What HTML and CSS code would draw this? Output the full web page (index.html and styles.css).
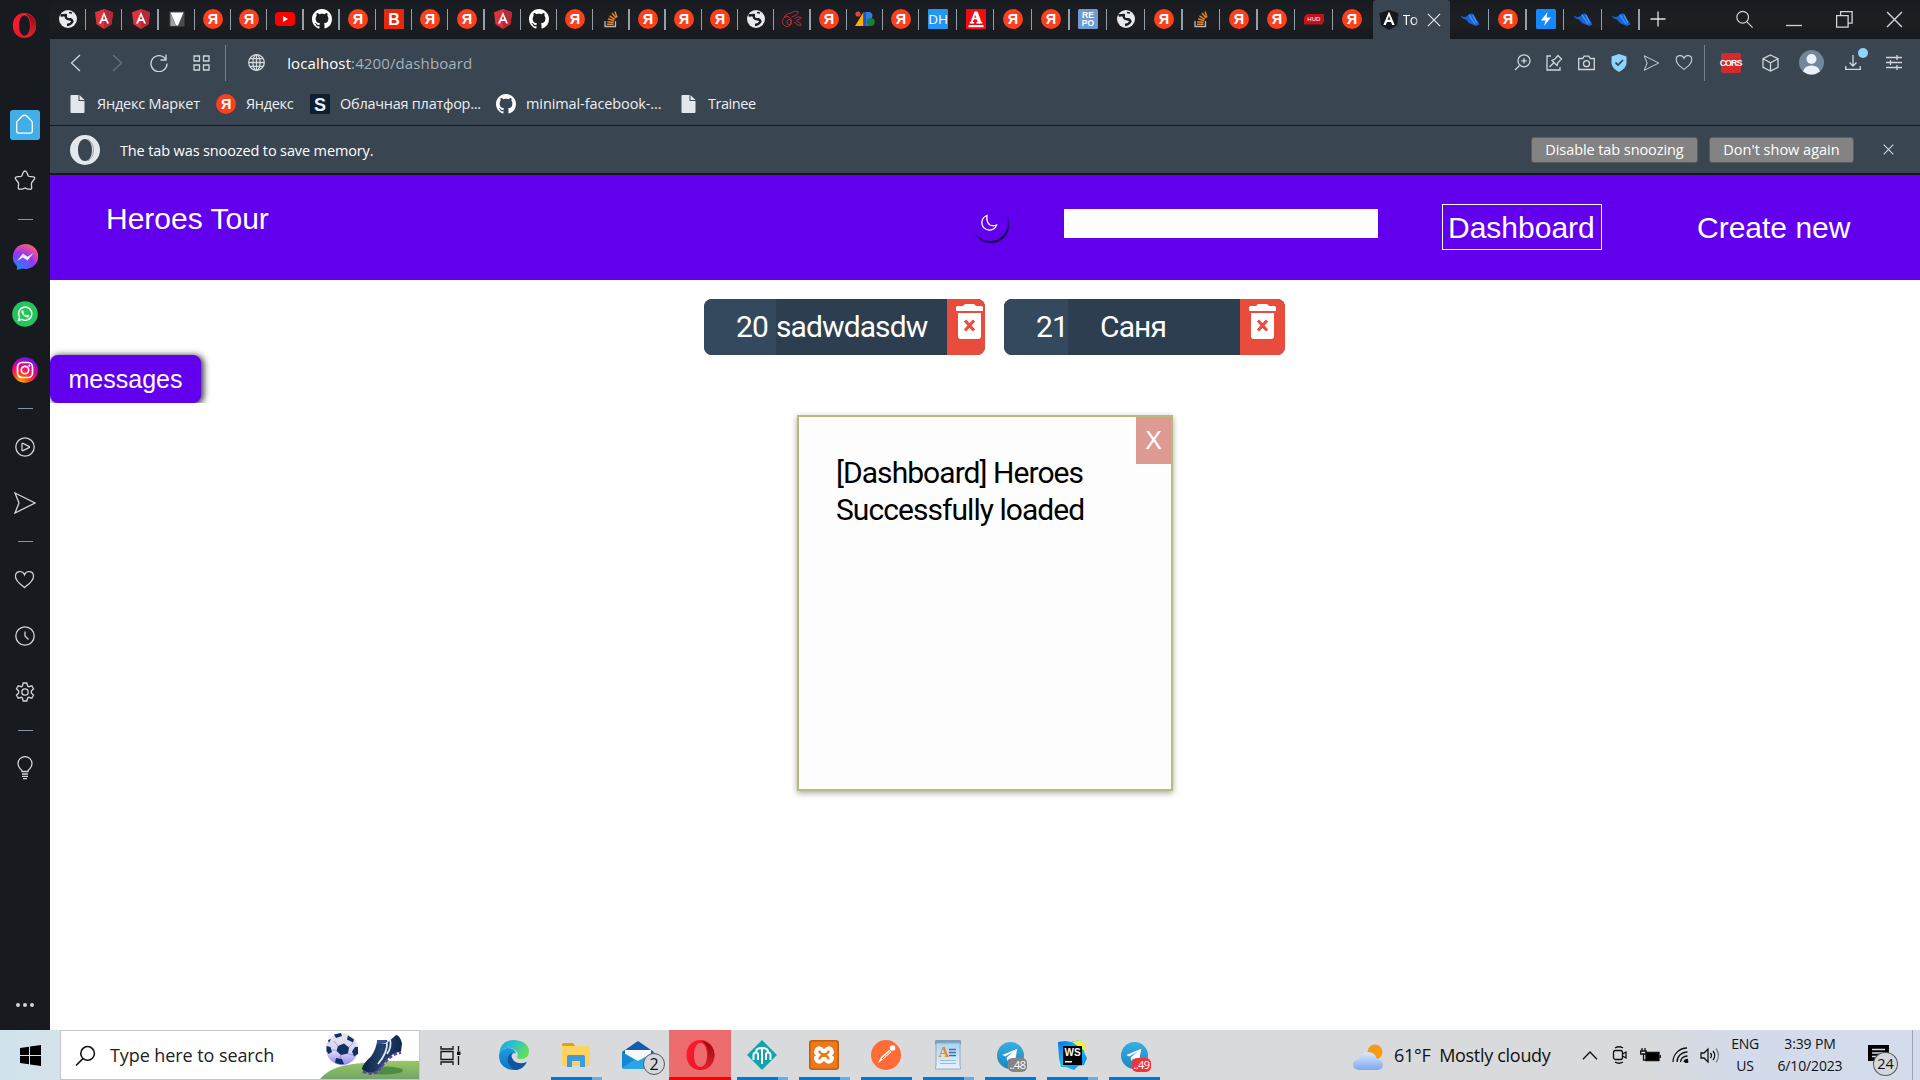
FILE: index.html
```html
<!DOCTYPE html>
<html lang="en">
<head>
<meta charset="utf-8">
<title>Tour of Heroes</title>
<link rel="stylesheet" href="styles.css">
</head>
<body>
<svg class="sprite" aria-hidden="true">
  <defs>
    <linearGradient id="gOpera" x1="0" y1="0" x2="1" y2="1"><stop offset="0" stop-color="#ff1b2d"/><stop offset="1" stop-color="#e0142a"/></linearGradient>
    <linearGradient id="gOperaIn" x1="0" y1="0" x2="0" y2="1"><stop offset="0" stop-color="#8f0b10"/><stop offset="1" stop-color="#e5222c"/></linearGradient>
    <radialGradient id="gMsg" cx=".2" cy="1" r="1.1"><stop offset="0" stop-color="#0a90ff"/><stop offset=".6" stop-color="#9a33f5"/><stop offset="1" stop-color="#ff6370"/></radialGradient>
    <radialGradient id="gIg" cx=".3" cy="1.05" r="1.05"><stop offset="0" stop-color="#ffd000"/><stop offset=".35" stop-color="#ff4a10"/><stop offset=".65" stop-color="#f0057e"/><stop offset="1" stop-color="#7a10e8"/></radialGradient>
    <linearGradient id="gEdgeA" x1="0" y1="0" x2="1" y2=".5"><stop offset="0" stop-color="#1f9de0"/><stop offset=".5" stop-color="#2fc2c8"/><stop offset="1" stop-color="#5fe05a"/></linearGradient>
    <linearGradient id="gEdgeB" x1="0" y1="0" x2="0" y2="1"><stop offset="0" stop-color="#1b9de2"/><stop offset="1" stop-color="#1173c4"/></linearGradient>
    <linearGradient id="gTg" x1="0" y1="0" x2="0" y2="1"><stop offset="0" stop-color="#37aee2"/><stop offset="1" stop-color="#1e86c0"/></linearGradient>
    <linearGradient id="gCloud" x1="0" y1="0" x2="0" y2="1"><stop offset="0" stop-color="#dceafe"/><stop offset="1" stop-color="#7ea8ee"/></linearGradient>
    <linearGradient id="gHill" x1="0" y1="0" x2="0" y2="1"><stop offset="0" stop-color="#9cc763"/><stop offset="1" stop-color="#6fa668"/></linearGradient>
    <linearGradient id="gBoot" x1="0" y1="0" x2="1" y2="0"><stop offset="0" stop-color="#0c2347"/><stop offset=".5" stop-color="#23456b"/><stop offset="1" stop-color="#0d2650"/></linearGradient>
    <linearGradient id="gBall" x1="0" y1="0" x2="0" y2="1"><stop offset="0" stop-color="#e6e4ea"/><stop offset=".6" stop-color="#d9d2f4"/><stop offset="1" stop-color="#8d87f8"/></linearGradient>
    <linearGradient id="gWs" x1="0" y1="0" x2="1" y2="1"><stop offset="0" stop-color="#0b6cf0"/><stop offset=".5" stop-color="#10c5e8"/><stop offset="1" stop-color="#087cfa"/></linearGradient>
    <linearGradient id="gPad" x1="0" y1="0" x2="0" y2="1"><stop offset="0" stop-color="#a9d4f5"/><stop offset="1" stop-color="#e9f4fc"/></linearGradient>
  </defs>
</svg>
<svg class="symbols" aria-hidden="true">
  <symbol id="ya" viewBox="0 0 20 20"><circle cx="10" cy="10" r="10" fill="#fc3f1d"/><text x="10" y="15.2" text-anchor="middle" font-family="Liberation Sans, sans-serif" font-weight="700" font-size="14.5" fill="#fff">Я</text></symbol>
  <symbol id="world" viewBox="0 0 20 20"><circle cx="10" cy="10" r="9" fill="#e6eaee"/><path d="M2.500 6.500l5.500-.5q-1 3.500 2 4 4 0 4.500 2.500-1.500 3-5.500 3.500" fill="none" stroke="#1a1d22" stroke-width="2.300" stroke-linejoin="round"/><path d="M11 3.500l3 .5" stroke="#1a1d22" stroke-width="1.600"/></symbol>
  <symbol id="ang" viewBox="0 0 20 20"><path d="M10 0l9 3.300-1.500 12L10 20l-7.500-4.700L1 3.300z" fill="#dd3340"/><path d="M10 0v20l7.500-4.700L19 3.300z" fill="#b52a36"/><path d="M10 3L5 14.500h2l1-2.600h4l1 2.600h2zm0 3.700l1.400 3.500H8.600z" fill="#fff"/></symbol>
  <symbol id="angb" viewBox="0 0 20 20"><path d="M10 0l9.500 3.300-1.500 12L10 20l-8-4.700L.5 3.300z" fill="#14171b"/><path d="M10 1.500L4.300 15h2.500l1.200-2.900h4l1.200 2.900h2.500zm0 4.500l1.300 3.800H8.700z" fill="#fff"/></symbol>
  <symbol id="tri" viewBox="0 0 20 20"><rect x="2.500" y="2.500" width="15" height="15" fill="#4a4d52"/><path d="M3.500 3.500h13L11 16.500H9z" fill="#fff"/><path d="M3.500 4l5.500 13H3.500z" fill="#9c9fa3"/></symbol>
  <symbol id="yt" viewBox="0 0 20 20"><rect y="3" width="20" height="14" rx="4" fill="#f00"/><path d="M8 7l5 3-5 3z" fill="#fff"/></symbol>
  <symbol id="gh" viewBox="0 0 16 16"><path fill="#fff" d="M8 0C3.580 0 0 3.580 0 8c0 3.540 2.290 6.530 5.470 7.590.4.070.55-.17.55-.38 0-.19-.01-.82-.01-1.490-2.010.37-2.530-.49-2.690-.94-.09-.23-.48-.94-.82-1.130-.28-.15-.68-.52-.01-.53.63-.01 1.080.58 1.230.82.72 1.210 1.870.87 2.330.66.07-.52.28-.87.51-1.070-1.780-.2-3.640-.89-3.640-3.950 0-.87.31-1.590.82-2.150-.08-.2-.36-1.020.08-2.120 0 0 .67-.21 2.200.82.64-.18 1.320-.27 2-.27s1.360.09 2 .27c1.530-1.040 2.200-.82 2.200-.82.44 1.100.16 1.920.08 2.120.51.56.82 1.270.82 2.150 0 3.070-1.870 3.750-3.650 3.950.29.25.54.73.54 1.480 0 1.070-.01 1.930-.01 2.200 0 .21.15.46.55.38A8.010 8.010 0 0 0 16 8c0-4.420-3.580-8-8-8z"/></symbol>
  <symbol id="bb" viewBox="0 0 20 20"><rect width="20" height="20" fill="#e8280c"/><text x="10" y="15.800" text-anchor="middle" font-family="Liberation Sans, sans-serif" font-weight="700" font-size="16" fill="#fff">B</text></symbol>
  <symbol id="so" viewBox="0 0 20 20" fill="none"><path d="M4 12v5.500h10.500V12" stroke="#b5b9bd" stroke-width="1.300"/><path d="M6 15.300h6.500M6.200 12.700l6.400.9M7 9.800l6 2M8.500 6.800l5.300 3.600M11 4l4 5M14 2.500l2 6" stroke="#e8832a" stroke-width="1.500"/></symbol>
  <symbol id="mole" viewBox="0 0 20 20" fill="none" stroke="#b82b35" stroke-width="1"><ellipse cx="5" cy="12.500" rx="4.500" ry="5"/><ellipse cx="7" cy="13" rx="2" ry="2.600"/><path d="M2 8q3-4 7-4 4-3 7-1.500 1 2.500-3 4L9.500 8M12.500 9.500q5-3 7-.500l-5 2.500q5 2.500 4.500 5-3 .5-7-3.500"/></symbol>
  <symbol id="ads" viewBox="0 0 20 20"><circle cx="3" cy="5" r="2.600" fill="#ea4335"/><path d="M8.500 3v14H0z" fill="#fbaf04"/><path d="M8.500 3H15q3.500 1.500 2 6l-3 8H8.500z" fill="#3579ea"/><path d="M8.500 3h2.500v14H8.500z" fill="#1b55c0"/><circle cx="15.700" cy="13" r="4" fill="#188038"/></symbol>
  <symbol id="dh" viewBox="0 0 20 20"><rect width="20" height="20" rx="1" fill="#2196f3"/><text x="10" y="15.200" text-anchor="middle" font-family="Open Sans, sans-serif" font-size="13.500" fill="#fff">DH</text></symbol>
  <symbol id="alfa" viewBox="0 0 20 20"><rect width="20" height="20" fill="#f30a12"/><text x="10" y="13.700" text-anchor="middle" font-family="Liberation Serif, serif" font-weight="700" font-size="16" fill="#fff" stroke="#fff" stroke-width=".8">A</text><path d="M2.500 16h15v2.200h-15z" fill="#fff"/></symbol>
  <symbol id="repo" viewBox="0 0 20 20"><rect width="20" height="20" rx="1.500" fill="#6f9bd0"/><g font-family="Liberation Sans, sans-serif" font-weight="700" font-size="8.500" fill="#fff" text-anchor="middle"><text x="10" y="9">RE</text><text x="10" y="17">PO</text></g></symbol>
  <symbol id="hub" viewBox="0 0 20 20"><path d="M3 5h17v7l-2 3.500H0V8z" fill="#c4111b"/><text x="9.800" y="12.200" text-anchor="middle" font-family="Liberation Sans, sans-serif" font-size="6" fill="#fff">HUD</text></symbol>
  <symbol id="shoe" viewBox="0 0 20 20"><path d="M.5 6.500q3 2.500 7 .5l1.500-2 4-.500 1 2.500 5.500 8.500-3.500 1.500-7-3-3-3.500q-4-.5-5.500-4z" fill="#1565d8"/><path d="M9 6l6 9M13 6l4 8" stroke="#4f97ff" stroke-width="1.200"/></symbol>
  <symbol id="bolt" viewBox="0 0 20 20"><rect width="20" height="20" rx="1.500" fill="#1389fd"/><path d="M11.500 3L5 11.500h4.500L8 17l7-8.500h-4.500z" fill="#fff"/></symbol>
  <symbol id="opera" viewBox="0 0 30 30"><path fill="url(#gOpera)" fill-rule="evenodd" d="M15 0C6 0 1 7 1 15s5 15 14 15 14-7 14-15S24 0 15 0zm0 3c4 0 6.500 5 6.500 12S19 27 15 27 8.500 22 8.500 15 11 3 15 3z"/><path fill="url(#gOperaIn)" d="M16 1c8 1 13 7 13 14s-5 13-13 14c4-2 6.500-7 6.500-14S20 3 16 1z"/></symbol>
  <symbol id="operaw" viewBox="0 0 30 30"><path fill="#e3e8ec" fill-rule="evenodd" d="M15 0a15 15 0 1 0 0 30 15 15 0 1 0 0-30zm0 4c4.500 0 7 5 7 11s-2.500 11-7 11-7-5-7-11 2.500-11 7-11z"/><path d="M18 4.500q5.500 3.500 5.500 10.500T18 26" fill="none" stroke="#9aa4ad" stroke-width="1"/></symbol>
  <symbol id="file" viewBox="0 0 14 18"><path fill="#e3e7eb" d="M0 1q0-1 1-1h7v6h6v11q0 1-1 1H1q-1 0-1-1z"/><path fill="#e3e7eb" d="M9 0l5 5H9z"/></symbol>
  <symbol id="send" viewBox="0 0 22 22"><path d="M1 1l20 10L1 21l4-10z"/></symbol>
  <symbol id="heart" viewBox="0 0 22 20"><path d="M11 18.500C8 16 1.500 12 1.500 6.500c0-6 7.500-6.500 9.500-1.500 2-5 9.500-4.500 9.500 1.500C20.500 12 14 16 11 18.500z"/></symbol>
  <symbol id="close" viewBox="0 0 16 16"><path d="M1 1l14 14M15 1L1 15"/></symbol>
  <symbol id="mag" viewBox="0 0 20 20"><circle cx="12" cy="8" r="6.500"/><path d="M7.500 13L1 19.500"/></symbol>
  <symbol id="trash" viewBox="0 0 27 36"><path fill="#fff" d="M0 3.500q0-1.500 1.500-1.500H7L9 0h9l2 2h5.500Q27 2 27 3.500V7H0zM2 9h23v23q0 3-3 3H5q-3 0-3-3z"/><path d="M9 16.500l9 10M18 16.500l-9 10" stroke="#e94e40" stroke-width="3.200"/></symbol>
  <symbol id="tg" viewBox="0 0 28 28"><circle cx="14" cy="14" r="14" fill="url(#gTg)"/><path d="M5.500 13.500L21 7l-2.500 14-5.500-4-2.500 2.800L10 16l7-6-8.500 5z" fill="#fff"/></symbol>
</svg>

<div class="screen">
  <div class="browser">
    <aside class="side line">
      <div class="side-logo"><svg width="25" height="25"><use href="#opera"/></svg></div>
      <div class="slot"><span class="home"><svg width="22" height="24" viewBox="0 0 22 24"><path d="M2 9l6-6.500q3-2.500 6 0L20 9v11q0 2-2 2H4q-2 0-2-2z"/></svg></span></div>
      <div class="slot"><svg width="22" height="21" viewBox="0 0 22 21"><path d="M11 1q1 0 1.700 1.300l1.300 3.200q.3.700 1 .9l4.500.5q1.800.5 1 2l-2.700 3.600q-.5.700-.4 1.400l.3 4q0 1.600-1.700 1.300h-2.500L11 18l-2.500 1.200H6q-1.700.3-1.700-1.300l.3-4q.1-.7-.4-1.400L1.500 8.900q-.8-1.500 1-2L7 6.400q.7-.2 1-.9l1.300-3.200Q10 1 11 1z"/></svg></div>
      <div class="dash"></div>
      <div class="slot"><svg class="solid" width="26" height="26" viewBox="0 0 26 26"><path fill="url(#gMsg)" d="M13 0a13 12.500 0 1 1-3 24.600L5 26v-4A12.700 12.700 0 0 1 13 0z"/><path fill="#eef0ff" d="M5 17l6-7.500 4.500 3.300L21.500 9l-6 7.500-4.500-3z"/></svg></div>
      <div class="slot"><svg class="solid" width="26" height="26" viewBox="0 0 26 26"><circle cx="13" cy="13" r="12.800" fill="#25c55b"/><path d="M6.500 19.500l1-3.500a6.600 6.600 0 1 1 2.400 2.400z" fill="none" stroke="#fff" stroke-width="1.400"/><path d="M10 9.500q.8-.8 1.500.8t-.2 1.700q1 2 2.800 2.700.9-1.200 1.700-.7 1.800.8 1 1.700-1.300 1.500-4-.3-3-2-3.400-4.200 0-1 .6-1.700z" fill="#fff"/></svg></div>
      <div class="slot"><svg class="solid" width="26" height="26" viewBox="0 0 26 26"><circle cx="13" cy="13" r="12.800" fill="url(#gIg)"/><g fill="none" stroke="#fff" stroke-width="1.700"><rect x="5.500" y="5.500" width="15" height="15" rx="4.500"/><circle cx="13" cy="13" r="3.700"/></g><circle cx="17.300" cy="8.700" r="1.100" fill="#fff"/></svg></div>
      <div class="dash"></div>
      <div class="slot"><svg width="20" height="20" viewBox="0 0 20 20"><circle cx="10" cy="10" r="9.200"/><path d="M7 7q0-1 1-.6l6 2.900q1 .7 0 1.400l-6 2.900q-1 .4-1-.6z"/></svg></div>
      <div class="slot"><svg width="22" height="22"><use href="#send"/></svg></div>
      <div class="dash"></div>
      <div class="slot"><svg width="21" height="19"><use href="#heart"/></svg></div>
      <div class="slot"><svg width="20" height="20" viewBox="0 0 20 20"><circle cx="10" cy="10" r="9.200"/><path d="M10 5.500V10l3.500 3.500"/></svg></div>
      <div class="slot"><svg width="20" height="20" viewBox="0 0 20 20"><circle cx="10" cy="10" r="3.200"/><path d="M8.200 1h3.600l.8 3 1.200.7 3-.9 1.700 3-2.200 2.300v1.800l2.200 2.300-1.700 3-3-.9-1.200.7-.8 3H8.200l-.8-3-1.200-.7-3 .9-1.700-3 2.200-2.300V9.100L1.500 6.800l1.700-3 3 .9L7.400 4z"/></svg></div>
      <div class="dash"></div>
      <div class="slot"><svg width="18" height="24" viewBox="0 0 18 24"><path d="M6 15.500q0-1.500-2-3a7 7 0 1 1 10 0q-2 1.500-2 3zM6 18h6M6 20.300h6M7 22.600h4"/></svg></div>
      <div class="more"><i></i><i></i><i></i></div>
    </aside>

    <div class="main">
      <div class="tabs">
        <div class="group early">
          <span><svg><use href="#world"/></svg></span><span><svg><use href="#ang"/></svg></span><span><svg><use href="#ang"/></svg></span><span><svg><use href="#tri"/></svg></span><span><svg><use href="#ya"/></svg></span><span><svg><use href="#ya"/></svg></span><span><svg><use href="#yt"/></svg></span><span><svg><use href="#gh"/></svg></span><span><svg><use href="#ya"/></svg></span><span><svg><use href="#bb"/></svg></span><span><svg><use href="#ya"/></svg></span><span><svg><use href="#ya"/></svg></span><span><svg><use href="#ang"/></svg></span><span><svg><use href="#gh"/></svg></span><span><svg><use href="#ya"/></svg></span><span><svg><use href="#so"/></svg></span><span><svg><use href="#ya"/></svg></span><span><svg><use href="#ya"/></svg></span><span><svg><use href="#ya"/></svg></span><span><svg><use href="#world"/></svg></span><span><svg><use href="#mole"/></svg></span><span><svg><use href="#ya"/></svg></span><span><svg><use href="#ads"/></svg></span><span><svg><use href="#ya"/></svg></span>
        </div>
        <div class="group mid">
          <span><svg><use href="#dh"/></svg></span><span><svg><use href="#alfa"/></svg></span><span><svg><use href="#ya"/></svg></span><span><svg><use href="#ya"/></svg></span><span><svg><use href="#repo"/></svg></span><span><svg><use href="#world"/></svg></span><span><svg><use href="#ya"/></svg></span><span><svg><use href="#so"/></svg></span><span><svg><use href="#ya"/></svg></span><span><svg><use href="#ya"/></svg></span><span><svg><use href="#hub"/></svg></span><span class="last"><svg><use href="#ya"/></svg></span>
        </div>
        <div class="active"><svg width="20" height="20"><use href="#angb"/></svg><b>To</b><svg class="x" width="14" height="14"><use href="#close"/></svg></div>
        <div class="group late">
          <span><svg><use href="#shoe"/></svg></span><span><svg><use href="#ya"/></svg></span><span><svg><use href="#bolt"/></svg></span><span><svg><use href="#shoe"/></svg></span><span><svg><use href="#shoe"/></svg></span>
        </div>
        <svg class="plus" width="16" height="16" viewBox="0 0 16 16"><path d="M8 .5v15M.5 8h15"/></svg>
        <div class="win line">
          <span><svg class="flip" width="19" height="18"><use href="#mag"/></svg></span>
          <span><svg width="16" height="20" viewBox="0 0 16 20"><path d="M0 16.500h16"/></svg></span>
          <span><svg width="17" height="17" viewBox="0 0 17 17"><path d="M.6 4.600h11.500v11.500H.6zM4.600 4.500V.6h11.500v11.500h-4"/></svg></span>
          <span><svg width="17" height="17"><use href="#close"/></svg></span>
        </div>
      </div>

      <div class="address line">
        <div class="nav">
          <span><svg width="11" height="18" viewBox="0 0 11 18"><path d="M10 1L1.500 9l8.500 8"/></svg></span>
          <span class="dim"><svg width="11" height="18" viewBox="0 0 11 18"><path d="M1 1l8.500 8L1 17"/></svg></span>
          <span><svg width="18" height="18" viewBox="0 0 18 18"><path d="M15.500 5A8 8 0 1 0 17 9.500M16 .5V6h-5.500"/></svg></span>
          <span><svg width="17" height="16" viewBox="0 0 17 16"><path d="M1 1h5.500v5H1zM10.500 1H16v5h-5.500zM1 10h5.500v5H1zM10.500 10H16v5h-5.500z"/></svg></span>
        </div>
        <i class="vsep"></i>
        <svg class="globe" width="17" height="17" viewBox="0 0 17 17"><circle cx="8.500" cy="8.500" r="7.800"/><ellipse cx="8.500" cy="8.500" rx="3.600" ry="7.800"/><path d="M.7 8.500h15.600M8.500.7v15.600M1.800 4.700h13.400M1.800 12.300h13.400"/></svg>
        <div class="url">localhost<em>:4200/dashboard</em></div>
        <div class="acts">
          <span><svg width="17" height="17" viewBox="0 0 17 17"><circle cx="10" cy="6.800" r="6"/><path d="M5.500 11.500L1 16M10 4v5.600M7.200 6.800h5.600"/></svg></span>
          <span><svg width="17" height="17" viewBox="0 0 17 17"><path d="M5 2H1v14h13v-3M3.500 13l4-4M6 6.500l5 5 1-3 3.500-3.500L12 1.500 9 5z"/></svg></span>
          <span><svg width="17" height="16" viewBox="0 0 17 16"><path d="M.7 3.500h4l1.500-2.300h4.600l1.500 2.300h4v11H.7z"/><circle cx="8.500" cy="8.700" r="3"/></svg></span>
          <span><svg class="solid" width="16" height="18" viewBox="0 0 16 18"><path d="M8 0l7.500 2.500V9q0 5-7.500 9Q.5 14 .5 9V2.500z" fill="#8ed4fb"/><path d="M4.500 8.500L7 11l5-5" fill="none" stroke="#24435c" stroke-width="1.700"/></svg></span>
          <span><svg width="17" height="16"><use href="#send"/></svg></span>
          <span><svg width="18" height="17"><use href="#heart"/></svg></span>
        </div>
        <i class="vsep"></i>
        <div class="exts">
          <span class="cors">CORS</span>
          <span><svg width="17" height="18" viewBox="0 0 17 18"><path d="M8.500 1L16 4.700v8.600L8.500 17 1 13.300V4.700zM1 4.700l7.500 4 7.500-4M8.500 8.700V17"/></svg></span>
          <span><svg class="solid" width="25" height="25" viewBox="0 0 25 25"><circle cx="12.500" cy="12.500" r="12.500" fill="#74879a"/><circle cx="12.500" cy="9" r="5" fill="#eaf1f7"/><path d="M4 21.500q1.500-6 8.500-6t8.500 6q-8.500 6-17 0z" fill="#eaf1f7"/></svg></span>
          <span class="dl"><svg width="16" height="15" viewBox="0 0 16 15"><path d="M8 0v11M4.500 7.500L8 11l3.500-3.500M.7 11v3.300h14.600V11"/></svg><i></i></span>
          <span><svg width="16" height="15" viewBox="0 0 16 15"><path d="M0 2.500h16M0 7.500h16M0 12.500h16M11 0v5M4.500 5v5M11 10v5"/></svg></span>
        </div>
      </div>

      <div class="bookmarks">
        <span class="bm b1"><svg width="15" height="18"><use href="#file"/></svg><b>Яндекс Маркет</b></span>
        <span class="bm b2"><svg width="20" height="20"><use href="#ya"/></svg><b>Яндекс</b></span>
        <span class="bm b3"><svg width="20" height="20" viewBox="0 0 20 20"><rect width="20" height="20" rx="1.500" fill="#0b1f30"/><text x="10" y="16.500" text-anchor="middle" font-family="Liberation Sans, sans-serif" font-weight="700" font-size="18" fill="#e9f1f5">S</text></svg><b>Облачная платфор...</b></span>
        <span class="bm b4"><svg width="20" height="20"><use href="#gh"/></svg><b>minimal-facebook-...</b></span>
        <span class="bm b5"><svg width="15" height="18"><use href="#file"/></svg><b>Trainee</b></span>
      </div>

      <div class="snooze">
        <svg width="30" height="30"><use href="#operaw"/></svg>
        <p>The tab was snoozed to save memory.</p>
        <button class="k1">Disable tab snoozing</button>
        <button class="k2">Don't show again</button>
        <svg class="x" width="11" height="11"><use href="#close"/></svg>
      </div>

      <header class="hero-bar">
        <h1>Heroes Tour</h1>
        <button class="theme"><svg width="18" height="18" viewBox="0 0 18 18"><path d="M7 1.500a7.500 7.500 0 1 0 9.500 9.500Q13 12.500 10 11 6 8 7 1.500z"/></svg></button>
        <input class="find" type="text">
        <a class="on">Dashboard</a>
        <a class="create">Create new</a>
      </header>

      <div class="page">
        <div class="cards">
          <div class="card"><span class="id">20</span><span class="name n1">sadwdasdw</span><span class="del"><svg width="27" height="36"><use href="#trash"/></svg></span></div>
          <div class="card"><span class="id id2">21</span><span class="name n2">Саня</span><span class="del"><svg width="27" height="36"><use href="#trash"/></svg></span></div>
        </div>
        <div class="msgwrap"><button class="messages">messages</button></div>
        <div class="toast"><p>[Dashboard] Heroes<br>Successfully loaded</p><button>X</button></div>
      </div>
    </div>
  </div>

  <footer class="taskbar">
    <div class="start"><svg width="21" height="21" viewBox="0 0 21 21"><path d="M0 3l9-1.300v8.300H0zM10 1.500L21 0v10H10zM0 11h9v8.300L0 18zM10 11h11v10l-11-1.500z"/></svg></div>
    <div class="search">
      <svg class="lens" width="21" height="21"><use href="#mag"/></svg>
      <b>Type here to search</b>
      <svg class="art" width="99" height="47" viewBox="0 0 99 47"><path d="M0 47Q12 32 45 31q24-3 54-2v18z" fill="url(#gHill)"/><ellipse cx="64" cy="38.500" rx="19" ry="4" fill="#3f7d3a" opacity=".75"/><circle cx="22" cy="17" r="16" fill="url(#gBall)"/><path d="M18 14l6-2.500 5 4-1 6-7 1.500-4.500-4zM14 2.500l7-1.500 1 3-6 2zM28 3.500l6 4-1 3-6-3zM35 15l3 0 0 7-4 2.500-2-5zM6.500 14l4 1 1.500 5-3.500 2-2-3zM16 26l6 1 2 5q-5 1-9-1.500zM8 8l3-1-2 4z" fill="#123163"/><path d="M21 23l-1 4M28 22l5 1M18 14l-4-5M29 15l4-4M12 18l5 0" stroke="#8b90bd" stroke-width=".8"/><path d="M57 9.500q5 3 9.500 2L76 3q4 0 6 8.500l-1 8q-7 1-11 5-5 4-9 11-5 6-12 5-6-1-7-4 1-5 9-12 5-7 6-15z" fill="url(#gBoot)"/><path d="M57 8h10l1 3-11 1z" fill="#3b4f96"/><path d="M67 10q1 10-9 22M70 7q2 8-3 15" stroke="#dfe6f4" stroke-width="1.800" fill="none"/><path d="M43 39.500q9 4 15 0 5-8 12-14 5-4 11-5" stroke="#6a38a8" stroke-width="2.600" stroke-dasharray="3.500 2" fill="none"/></svg>
    </div>
    <div class="apps">
      <span class="cell tv"><svg width="21" height="21" viewBox="0 0 21 21" fill="none" stroke="#111" stroke-width="1.300"><path d="M1 1v3h12V1M1 20v-3h12v3M1 6.500h12v8H1zM18.500 1v5M18.500 11v9"/><path d="M17 6.500h3.500v3.500H17z" fill="#111" stroke="none"/></svg></span>
      <span class="cell"><svg width="30" height="30" viewBox="0 0 30 30"><path d="M27 22.500Q23 30 15 30 0 29 0 15 2 8 9 8q6 0 8 5-5 0-5 5 2 6 9 6 3 0 6-1.500z" fill="url(#gEdgeB)"/><path d="M0 15Q1 0 15 0q14 1 15 11 0 8-8 8-4 0-4-2 2-3-1-6-4-4-9-3-6 1-8 7z" fill="url(#gEdgeA)"/><path d="M13 12.500q-7 5-3 12 3 4.500 7 5.500 7-.5 11-8-8 3-13-1-4-4-2-8.500z" fill="#0f559f"/></svg></span>
      <span class="cell run multi"><svg width="28" height="24" viewBox="0 0 28 24"><path d="M0 2q0-2 2-2h9l3 4H0z" fill="#e0a010"/><path d="M0 3h26q2 0 2 2v17q0 1-1 1H1q-1 0-1-1z" fill="#ffd45e"/><path d="M5 24V14q0-2 2-2h14q2 0 2 2v10h-5v-6h-8v6z" fill="#3f9be0"/></svg></span>
      <span class="cell mail"><svg width="32" height="28" viewBox="0 0 32 28"><path d="M0 11L16 0l16 11v4H0z" fill="#0f5fae"/><path d="M3 9h26v10H3z" fill="#f6f9fc"/><path d="M0 11l16 9 16-9v15q0 2-2 2H2q-2 0-2-2z" fill="#2aa5e6"/><path d="M0 11l12 8L0 27z" fill="#1687d2"/></svg><i class="badge">2</i></span>
      <span class="cell opera"><svg width="31" height="30"><use href="#opera"/></svg></span>
      <span class="cell run multi"><svg width="30" height="30" viewBox="0 0 30 30"><path d="M15 0l15 15-15 15L0 15z" fill="#12a3b0"/><path d="M15 7v17M6.500 20v-5q0-2.500 2.300-2.500T11 15v5M23.500 20v-5q0-2.500-2.300-2.500T19 15v5M9 12q0-4 6-4t6 4" fill="none" stroke="#fff" stroke-width="2"/></svg></span>
      <span class="cell run multi"><svg width="30" height="30" viewBox="0 0 30 30"><rect width="30" height="30" rx="3" fill="#c85a0a"/><rect x="1.500" y="1.500" width="27" height="27" rx="2" fill="#ea7a1e"/><path d="M8 9.500q3-3 6 1.500h2q3-4.500 6-1.500 2 3-1 5.500 3 3 1 5.500-3 3-6-1.500h-2q-3 4.500-6 1.500-2-2.500 1-5.500-3-2.500-1-5.500z" fill="none" stroke="#fff" stroke-width="4"/></svg></span>
      <span class="cell run"><svg width="30" height="30" viewBox="0 0 30 30"><circle cx="15" cy="15" r="15" fill="#ff6c37"/><circle cx="21.500" cy="8" r="2.800" fill="#fff"/><path d="M7 23l3-6 8-7 2.500 2-8 7z" fill="#fff"/><path d="M11 19l8-7.500" stroke="#ff6c37"/></svg></span>
      <span class="cell run multi"><svg width="26" height="30" viewBox="0 0 26 30"><rect width="26" height="5" rx="1" fill="#7d9db8"/><path d="M1 3h24v23l1 3H0l1-3z" fill="url(#gPad)" stroke="#8faec6"/><text x="9" y="17" text-anchor="middle" font-family="Liberation Serif, serif" font-weight="700" font-size="15" fill="#f08a1d">A</text><path d="M14 9.500h7M14 12.500h7M14 15.500h7" stroke="#3e6fa8" stroke-width="1.300"/><path d="M5 20.500h16M5 23.500h16" stroke="#9bbad6"/></svg></span>
      <span class="cell run tg"><svg width="27" height="27"><use href="#tg"/></svg><i class="cnt">..48</i></span>
      <span class="cell run multi"><svg width="31" height="31" viewBox="0 0 31 31"><path d="M1 2l7-1 6 1 9-2 6 5-2 7 3 6-3 7-6 1-4 4-8-3-5 0-2-9z" fill="url(#gWs)"/><path d="M15 2l8-2 6 5-1 6z" fill="#eef04c"/><rect x="6" y="6" width="19" height="19" fill="#000"/><text x="15.500" y="15.500" text-anchor="middle" font-family="Liberation Sans, sans-serif" font-weight="700" font-size="10" fill="#fff">WS</text><path d="M8 21h7v1.500H8z" fill="#fff"/></svg></span>
      <span class="cell run tg"><svg width="27" height="27"><use href="#tg"/></svg><i class="cnt red">..49</i></span>
    </div>
    <div class="tray">
      <svg class="wx" width="31" height="26" viewBox="0 0 31 26"><circle cx="22" cy="8" r="7.500" fill="#f79a1c"/><path d="M6 26q-6-1-6-5.500T6 15q2-7 9-7t9 7q6 1 6 5.500T25 26z" fill="url(#gCloud)"/></svg>
      <b class="wtxt">61°F&nbsp; Mostly cloudy</b>
      <div class="ti">
        <span><svg width="16" height="9" viewBox="0 0 16 9"><path d="M1 8.300L8 1l7 7.300"/></svg></span>
        <span><svg width="16" height="18" viewBox="0 0 16 18"><rect x="1.500" y="4.500" width="9" height="9" rx="2"/><path d="M10.500 8l3.500-2v6l-3.500-2M3 2q4-2.500 8 0M3 16q4 2.500 8 0"/></svg></span>
        <span><svg width="21" height="14" viewBox="0 0 21 14"><path d="M6 4.500h13v8H6z" fill="#000"/><path d="M20.300 7v3M2 0v3M5 0v3M.7 3h5.500v3H.7zM3.500 6v6h3"/></svg></span>
        <span><svg width="17" height="16" viewBox="0 0 17 16"><path d="M1 15A14 14 0 0 1 15 1M5 15A10 10 0 0 1 15.500 5M8.500 15Q9 9.500 15.500 9M12 15q.5-2.500 4-2.500"/><circle cx="14.500" cy="14.300" r="1.300" fill="#000"/></svg></span>
        <span><svg width="20" height="17" viewBox="0 0 20 17"><path d="M1 6h3l4-4v13l-4-4H1zM10.500 6q2 2.500 0 5M13 4q3.500 4.500 0 9"/><path d="M16 1.500q5 7 0 14" opacity=".45"/></svg></span>
      </div>
      <div class="lang"><b>ENG</b><b>US</b></div>
      <div class="clock"><b>3:39 PM</b><b>6/10/2023</b></div>
      <div class="note"><svg width="21" height="21" viewBox="0 0 21 21"><path d="M0 0h21v16h-8l-4 5v-5H0z"/><path d="M4 4.500h13M4 8h13M4 11.500h8" stroke="#d4dbe8" stroke-width="1.300"/></svg><i class="badge">24</i></div>
    </div>
  </footer>
</div>
</body>
</html>
```

FILE: styles.css
```css
* { box-sizing: border-box; }
body { margin: 0; background: #fff; font-family: "Open Sans", "Noto Sans", sans-serif; overflow: hidden; }
b, em, i { font-weight: 400; font-style: normal; }
button { border: 0; padding: 0; font-family: inherit; }
svg { display: block; flex: none; }
.sprite { position: absolute; width: 0; height: 0; }
.symbols { display: none; }
.screen { width: 1920px; height: 1080px; display: flex; flex-direction: column; }
.browser { display: flex; height: 1030px; }
.line svg { fill: none; stroke: #cfd6dc; stroke-width: 1.3; }
.line svg.solid { stroke: none; }

/* sidebar */
.side { width: 50px; background: #171a1f; display: flex; flex-direction: column; align-items: center; padding-right: 1px; }
.side-logo { height: 96.500px; padding-top: 13px; width: 50px; display: flex; justify-content: center; }
.side-logo svg { stroke: none; }
.slot { height: 56.200px; display: flex; align-items: center; justify-content: center; }
.home { width: 30px; height: 30px; border-radius: 3px; background: #42aee8; display: flex; align-items: center; justify-content: center; }
.home svg { stroke: #fff; stroke-width: 1.5; width: 19px; height: 21px; }
.dash { height: 20.500px; display: flex; align-items: center; padding-left: 2px; }
.dash::before { content: ""; width: 15px; height: 1px; background: #8394a3; }
.more { margin-top: auto; height: 50px; display: flex; gap: 3px; align-items: center; padding-left: 1px; }
.more i { width: 4px; height: 4px; border-radius: 50%; background: #cdd3d9; }

/* tab strip */
.main { width: 1870px; display: flex; flex-direction: column; }
.tabs { height: 39px; background: linear-gradient(#171b1f, #1d1f23 60%, #15181c); display: flex; }
.group { display: flex; height: 39px; }
.group span { display: flex; align-items: center; justify-content: center; position: relative; height: 38px; width: 37.620px; }
.group.early span { width: 36.230px; }
.group svg { width: 20px; height: 20px; }
.group span::after { content: ""; position: absolute; right: 0; top: 9px; width: 1.300px; height: 21px; background: #93a1ad; }
.group span.last::after { display: none; }
.active { width: 77px; margin: 0 2px; background: #394550; border-radius: 3px 3px 0 0; display: flex; align-items: center; padding-left: 6px; }
.active b { width: 17px; margin-left: 4px; color: #fff; font-size: 14px; letter-spacing: -.4px; overflow: hidden; -webkit-mask: linear-gradient(90deg, #000 55%, rgba(0,0,0,.4)); mask: linear-gradient(90deg, #000 55%, rgba(0,0,0,.4)); }
.active .x { stroke: #e8ecef; stroke-width: 1.3; margin-left: 7px; }
.plus { stroke: #dfe3e6; stroke-width: 1.3; margin: 11px 0 0 10px; }
.win { margin-left: auto; display: flex; height: 38px; padding-right: 1px; }
.win span { width: 50px; display: flex; align-items: center; justify-content: center; }
.flip { transform: scaleX(-1); }

/* address bar */
.address { height: 47px; background: #394550; display: flex; align-items: center; }
.nav { display: flex; margin-left: 5px; margin-right: 3px; }
.nav span { width: 41.800px; display: flex; justify-content: center; align-items: center; }
.nav .dim { opacity: .3; }
.vsep { width: 1px; height: 36px; background: #77828c; }
.globe { margin: 0 22px 0 22px; }
.url { font-size: 15px; color: #fff; letter-spacing: .12px; }
.url em { color: #a6b1bb; }
.acts { display: flex; margin-left: auto; margin-right: 4px; }
.acts span { width: 32.300px; display: flex; justify-content: center; align-items: center; }
.exts { display: flex; align-items: center; width: 215px; padding-left: 5.500px; }
.exts span { width: 41px; display: flex; justify-content: center; align-items: center; position: relative; }
.exts .cors { width: 20px; height: 20px; margin: 0 9px 0 10.500px; background: #d32a2d; border-radius: 2px; color: #fff; font: 700 9px/20px "Liberation Sans Narrow", "Liberation Sans", sans-serif; letter-spacing: -1.1px; padding-right: 1px; }
.dl i { position: absolute; width: 10px; height: 10px; border-radius: 50%; background: #8ed4fb; right: 5px; top: -7px; }

/* bookmarks */
.bookmarks { height: 39px; background: #394550; display: flex; align-items: center; padding: 0 0 4px 20px; }
.bm { display: flex; align-items: center; color: #eceff2; font-size: 14.500px; white-space: nowrap; }
.bm svg + b { margin-left: 12px; }
.b1 { width: 146px; letter-spacing: -.2px; }
.bm.b2 b, .bm.b3 b, .bm.b4 b { margin-left: 10px; }
.b2 { width: 94px; letter-spacing: -.3px; }
.b3 { width: 186px; letter-spacing: -.25px; }
.b4 { width: 185px; letter-spacing: -.1px; }
.b5 { letter-spacing: -.45px; }

/* snooze notice */
.snooze { height: 50px; background: #394550; border-top: 1px solid #15191d; border-bottom: 2px solid #15191d; display: flex; align-items: center; padding: 0 26px 0 20px; }
.snooze p { margin: 1px auto 0 20px; color: #fff; font-size: 14.500px; letter-spacing: -.13px; }
.snooze button { height: 26px; background: #838383; border: 1px solid #5c5c5c; border-radius: 3px; color: #fff; font-size: 14.500px; letter-spacing: -.08px; white-space: nowrap; }
.snooze .k1 { width: 167px; }
.snooze .k2 { width: 145px; margin-left: 11px; letter-spacing: 0; }
.snooze .x { stroke: #d3d8dc; stroke-width: 1.5; margin-left: 29px; }

/* app header */
.hero-bar { height: 105px; background: #6200ee; display: flex; font-family: "Liberation Sans", Arial, sans-serif; color: #fff; font-size: 30px; }
.hero-bar h1 { margin: 26px 0 0 56px; width: 867px; font-weight: 400; font-size: 30px; line-height: 36px; letter-spacing: 0; }
.theme { width: 36px; height: 36px; margin-top: 30px; margin-left: -1px; margin-right: 1px; border-radius: 50%; background: #6200ee; box-shadow: 1px 2px 1px #16004a; display: flex; align-items: center; justify-content: center; }
.theme svg { fill: none; stroke: #fff; stroke-width: 1.3; margin-right: 3px; }
.find { width: 314px; height: 29px; margin: 34px 64px 0 55px; border: 0; background: #fff; }
.on { width: 160px; height: 46px; margin-top: 29px; border: 1px solid #fff; padding-left: 5px; line-height: 45px; }
.create { margin: 29px 0 0 95px; line-height: 47px; white-space: nowrap; }

/* app body */
.page { flex: 1; background: #fff; }
.cards { display: flex; gap: 19px; padding: 19px 0 0 654px; }
.card { width: 281px; height: 56px; border-radius: 8px; overflow: hidden; display: flex; background: #2c3e50; color: #fff; font: 30px/55px Roboto, sans-serif; letter-spacing: -.9px; }
.id { width: 72px; padding-left: 32px; background: #34495e; flex: none; }
.id2 { width: 64px; }
.name { flex: none; }
.n1 { width: 171px; }
.n2 { width: 172px; padding-left: 32px; }
.del { flex: 1; background: #e94b3c; padding: 5px 0 0 9px; }
.msgwrap { width: 170px; height: 48px; clip-path: inset(-10px 0 0 0); }
.messages { width: 151px; height: 48px; border-radius: 8px; background: #6200ee; color: #fff; font: 25px "Liberation Sans", Arial, sans-serif; box-shadow: 2px 1px 6px 1px rgba(0,0,0,.75); }
.toast { width: 376px; height: 376px; margin: 12px 0 0 747px; border: 2px solid #b8bc78; background: #fdfdfd; box-shadow: 0 2px 6px rgba(0,0,0,.35); display: flex; justify-content: space-between; align-items: flex-start; }
.toast p { margin: 37px 0 0 37px; font: 30px/37px Roboto, sans-serif; letter-spacing: -.95px; color: #000; white-space: nowrap; }
.toast button { width: 35px; height: 47px; background: #de9b93; color: #fff; font: 25px "Liberation Sans", Arial, sans-serif; flex: none; }

/* taskbar */
.taskbar { height: 50px; display: flex; background: linear-gradient(90deg, #cfe3ec 0, #d4e2e9 60px, #d8dadd 420px, #d8dadc 1650px, #d3dbea 1740px, #d4dceb); color: #111; }
.start { width: 60px; display: flex; align-items: center; justify-content: center; }
.search { width: 360px; background: #fff; border: 1px solid #c3c6c8; display: flex; align-items: center; padding-left: 14px; }
.search b { font-size: 18px; margin-left: 14px; color: #222; letter-spacing: -.08px; white-space: nowrap; }
.lens { fill: none; stroke: #111; stroke-width: 1.5; }
.art { margin-left: auto; align-self: flex-end; }
.apps { display: flex; padding-left: 1px; }
.cell { width: 62px; height: 50px; display: flex; align-items: center; justify-content: center; position: relative; }
.cell.tv { padding-right: 4px; }
.run::after { content: ""; position: absolute; left: 6px; bottom: 0; width: 51px; height: 3px; background: #0078d7; }
.multi::after { background: linear-gradient(90deg, #0078d7 41px, #64aeea 41px); }
.cell.opera { background: #ed6c6d; border-bottom: 3px solid #f00; padding-top: 3px; }
.badge { position: absolute; width: 22px; height: 22px; border: 1px solid #55585b; border-radius: 50%; background: #d5d8db; font-size: 16px; line-height: 20px; text-align: center; right: 4px; bottom: 5px; }
.cnt { position: absolute; left: 29px; bottom: 8px; width: 19px; height: 14px; border-radius: 5px; background: #858585; color: #fff; font-size: 11px; line-height: 14px; letter-spacing: -.6px; text-align: center; }
.cnt.red { background: #f0353a; }
.tray { margin-left: auto; display: flex; align-items: center; width: 567px; }
.wx { margin-top: 3px; }
.wtxt { width: 181px; margin-left: 10px; font-size: 18px; letter-spacing: -.3px; white-space: nowrap; }
.ti { display: flex; width: 156px; }
.ti span { width: 30px; display: flex; justify-content: center; align-items: center; }
.ti svg { fill: none; stroke: #111; stroke-width: 1.3; }
.lang, .clock { display: flex; flex-direction: column; align-items: center; font-size: 14px; line-height: 22px; letter-spacing: -.3px; white-space: nowrap; }
.lang { width: 32px; margin-left: -2px; }
.clock { width: 70px; margin-left: 14px; letter-spacing: -.15px; margin-right: -2px; }
.note { width: 70px; height: 50px; border-right: 1px solid #9aa5b5; position: relative; padding: 15px 0 0 25px; }
.note .badge { right: 14px; width: 25px; height: 24px; line-height: 22px; bottom: 4px; font-size: 14.500px; }
```
